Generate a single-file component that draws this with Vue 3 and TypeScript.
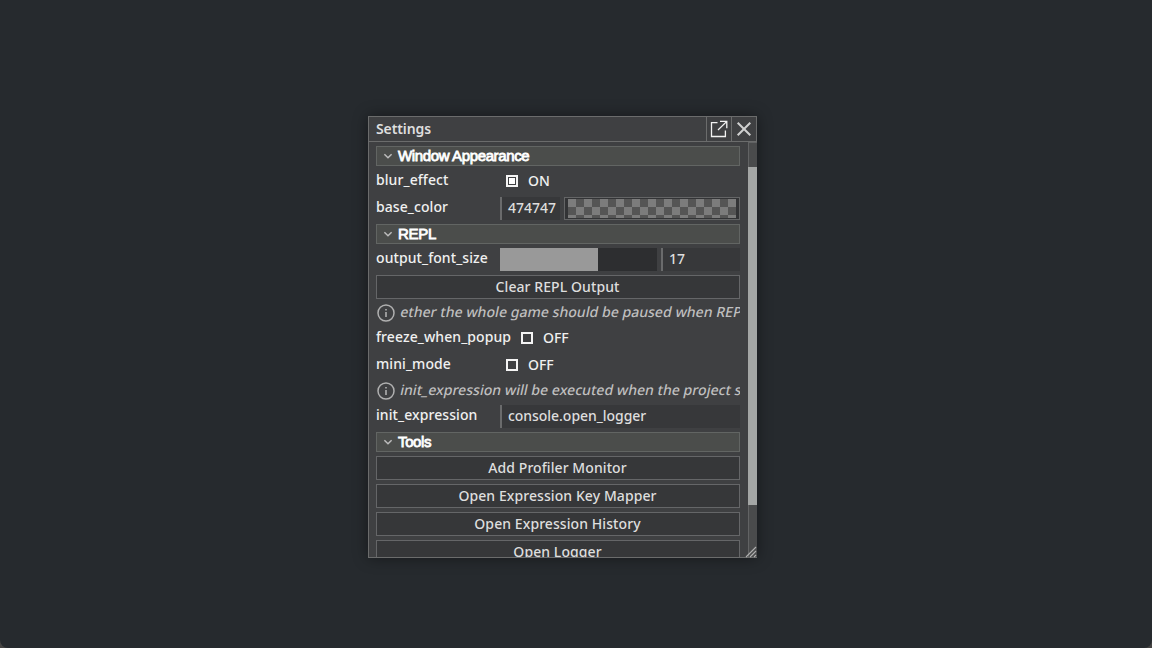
<script setup lang="ts">
type Row =
  | { kind: 'section'; text: string; tone: string }
  | { kind: 'check'; label: string; on: boolean; wide?: boolean }
  | { kind: 'color'; label: string; value: string }
  | { kind: 'slider'; label: string; value: number; percent: number }
  | { kind: 'button'; text: string }
  | { kind: 'info'; text: string }
  | { kind: 'input'; label: string; value: string }

const rows: Row[] = [
  { kind: 'section', text: 'Window Appearance', tone: 'tight' },
  { kind: 'check', label: 'blur_effect', on: true },
  { kind: 'color', label: 'base_color', value: '474747' },
  { kind: 'section', text: 'REPL', tone: 'normal' },
  { kind: 'slider', label: 'output_font_size', value: 17, percent: 62.4 },
  { kind: 'button', text: 'Clear REPL Output' },
  { kind: 'info', text: 'ether the whole game should be paused when REP' },
  { kind: 'check', label: 'freeze_when_popup', on: false, wide: true },
  { kind: 'check', label: 'mini_mode', on: false },
  { kind: 'info', text: 'init_expression will be executed when the project s' },
  { kind: 'input', label: 'init_expression', value: 'console.open_logger' },
  { kind: 'section', text: 'Tools', tone: 'tight' },
  { kind: 'button', text: 'Add Profiler Monitor' },
  { kind: 'button', text: 'Open Expression Key Mapper' },
  { kind: 'button', text: 'Open Expression History' },
  { kind: 'button', text: 'Open Logger' },
]
</script>

<template>
  <main class="desktop">
    <div class="screen">
      <section class="window">
        <header class="titlebar">
          <span class="title">Settings</span>
          <button class="tool" aria-label="Pop out">
            <svg width="24" height="24" viewBox="0 0 24 24" fill="none" stroke="#f2f2f2" stroke-width="1.3">
              <path d="M10.5 5.6H4.5V19.5H18.4V13.5M11 13L19.6 4.6M13 4.4H19.8V11.2" />
            </svg>
          </button>
          <button class="tool" aria-label="Close">
            <svg width="24" height="24" viewBox="0 0 24 24" fill="none" stroke="#d0d0d0" stroke-width="2">
              <path d="M5.7 5.7L18.3 18.3M18.3 5.7L5.7 18.3" />
            </svg>
          </button>
        </header>
        <div class="body">
          <div class="list">
            <template v-for="(row, i) in rows" :key="i">
              <div v-if="row.kind === 'section'" class="section">
                <svg class="chevron" width="10" height="8" viewBox="0 0 10 8" fill="none" stroke="#bcbcbc" stroke-width="1.5">
                  <path d="M1.4 2.2L5 5.8L8.6 2.2" />
                </svg>
                <span class="heading" :class="row.tone">{{ row.text }}</span>
              </div>
              <button v-else-if="row.kind === 'button'" class="action">{{ row.text }}</button>
              <div v-else-if="row.kind === 'info'" class="info">
                <svg width="20" height="20" viewBox="0 0 20 20" fill="none" stroke="#b0b0b0" stroke-width="1.5">
                  <circle cx="10" cy="10" r="8" />
                  <path d="M10 9V14M10 6V7.6" stroke-width="1.6" />
                </svg>
                <span class="hint">{{ row.text }}</span>
              </div>
              <div v-else class="row" :class="{ wide: row.kind === 'check' && row.wide }">
                <label class="name">{{ row.label }}</label>
                <div v-if="row.kind === 'check'" class="check">
                  <span class="box" :class="{ on: row.on }"></span>
                  <span>{{ row.on ? 'ON' : 'OFF' }}</span>
                </div>
                <div v-else-if="row.kind === 'color'" class="pair">
                  <span class="field hex">{{ row.value }}</span>
                  <span class="swatch"><i></i></span>
                </div>
                <div v-else-if="row.kind === 'slider'" class="pair">
                  <span class="track"><i :style="{ width: row.percent + '%' }"></i></span>
                  <span class="field number">{{ row.value }}</span>
                </div>
                <span v-else class="field">{{ row.value }}</span>
              </div>
            </template>
          </div>
          <div class="scrollbar"><i class="thumb"></i></div>
        </div>
        <svg class="grip" width="12" height="12" viewBox="0 0 12 12" stroke="#b0b0b0" stroke-width="1.1">
          <path d="M1 11L11 1M5 11L11 5M9 11L11 9" />
        </svg>
      </section>
    </div>
  </main>
</template>

<style>
body {
  margin: 0;
  background: #454443;
}
</style>

<style scoped>
* {
  box-sizing: border-box;
}
.desktop {
  width: 1152px;
  height: 648px;
  overflow: hidden;
  background: #454443;
  font: 500 14px/20px "Noto Sans", sans-serif;
  color: #f0f0f0;
}
.screen {
  height: 648px;
  padding: 116px 0 0 368px;
  border-radius: 0 0 8px 8px;
  background: #262a2e;
}
.window {
  position: relative;
  display: flex;
  flex-direction: column;
  width: 389px;
  height: 442px;
  border: 1px solid #6b6c6c;
  background: #3f4042;
  box-shadow: 0 0 14px rgba(0, 0, 0, 0.42);
}
button {
  padding: 0;
  border: 0;
  background: none;
  font: inherit;
  color: inherit;
}
.titlebar {
  display: flex;
  flex: none;
  height: 25px;
  border-bottom: 1px solid #6b6c6c;
}
.title {
  flex: 1;
  padding: 2px 0 0 7px;
  font-weight: 600;
  letter-spacing: -0.1px;
  color: #dedede;
}
.tool {
  width: 25px;
  height: 24px;
  border-left: 1px solid #6b6c6c;
}
.tool svg {
  display: block;
}
.body {
  display: flex;
  flex: 1;
  min-height: 0;
}
.list {
  display: flex;
  flex: 1;
  flex-direction: column;
  gap: 4px;
  min-width: 0;
  padding: 4px 8px 0 7px;
  overflow: hidden;
}
.section {
  display: flex;
  flex: none;
  align-items: center;
  gap: 5px;
  height: 20px;
  padding-left: 6px;
  border: 1px solid #626563;
  background: #4b4d4b;
  font: 400 15px/17px "Liberation Sans", sans-serif;
  color: #fff;
  -webkit-text-stroke: 0.8px #fff;
}
.heading {
  height: 18px;
  transform: translateY(-0.5px);
}
.heading.tight {
  letter-spacing: -0.37px;
}
.heading.normal {
  letter-spacing: -0.25px;
}
.row {
  display: grid;
  flex: none;
  grid-template-columns: 120px 1fr;
  gap: 4px;
  height: 23px;
}
.row.wide {
  grid-template-columns: 135px 1fr;
}
.name {
  letter-spacing: 0.08px;
  white-space: nowrap;
}
.check {
  display: flex;
  align-items: center;
  gap: 10px;
  height: 22px;
  padding-left: 6px;
  line-height: 22px;
}
.box {
  width: 12px;
  height: 12px;
  border: 2px solid #f4f4f4;
}
.box.on {
  padding: 1px;
  background: #fff content-box;
}
.pair {
  display: flex;
  gap: 4px;
}
.field {
  height: 23px;
  padding-left: 6px;
  border-left: 2px solid #6a6b6c;
  background: #37383a;
  line-height: 22px;
  letter-spacing: -0.04px;
  color: #dedede;
}
.hex {
  width: 60px;
  letter-spacing: 0;
}
.swatch {
  flex: 1;
  padding: 1px 3px;
  border: 1px solid #646566;
  background: #333436;
}
.swatch i {
  display: block;
  height: 19px;
  background: repeating-conic-gradient(#555 0 25%, #7c7c7c 0 50%) 0 0 / 16px 16px;
}
.track {
  width: 157px;
  background: #2d2e30;
}
.track i {
  display: block;
  height: 100%;
  background: #999;
}
.number {
  flex: 1;
}
.action {
  flex: none;
  height: 24px;
  padding: 1px 1px 1px 0;
  border: 1px solid #656668;
  background: #363739;
  line-height: 20px;
  letter-spacing: 0.08px;
  text-align: center;
  color: #dedede;
}
.info {
  display: flex;
  flex: none;
  gap: 4px;
  height: 20px;
  overflow: hidden;
  line-height: 18px;
  white-space: nowrap;
  color: #bfbfbf;
}
.info svg {
  flex: none;
}
.hint {
  height: 18px;
  padding-left: 0.5px;
  letter-spacing: 0.05px;
  transform: skewX(-12deg);
}
.scrollbar {
  flex: none;
  width: 9px;
  margin-right: -1px;
  padding-top: 24px;
  border-top: 1px solid #626364;
  border-left: 1px solid #626364;
  background: #4a4b4c;
}
.thumb {
  display: block;
  height: 338px;
  margin-left: -1px;
  background: #a4a6a5;
}
.grip {
  position: absolute;
  right: -1px;
  bottom: -1px;
}
</style>
